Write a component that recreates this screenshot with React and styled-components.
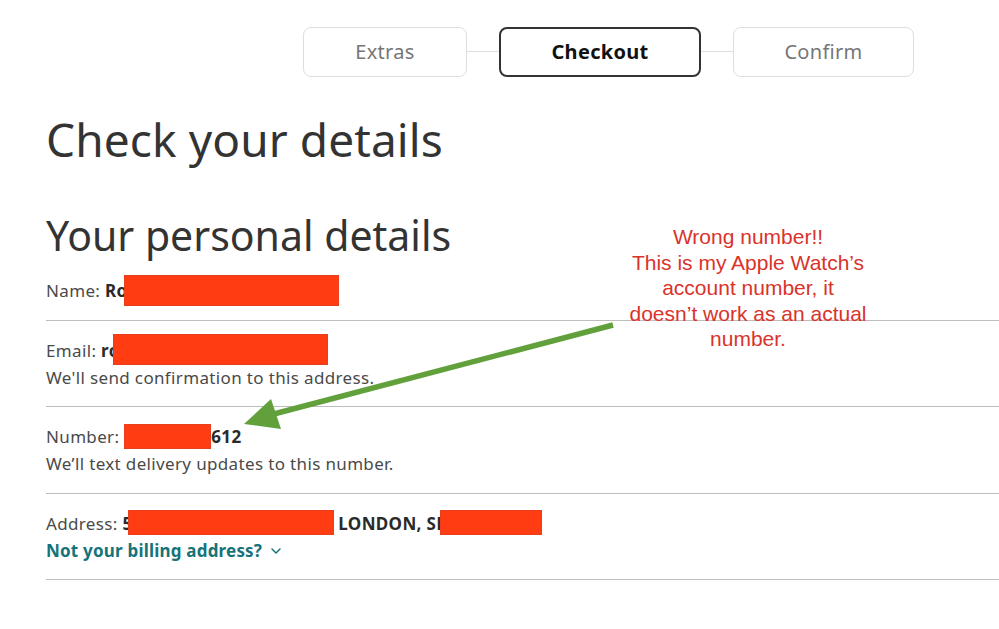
import React from "react";
import styled, { createGlobalStyle } from "styled-components";
import { ChevronDown } from "lucide-react";

const GlobalStyle = createGlobalStyle`
  html, body {
    margin: 0;
    padding: 0;
    background: #ffffff;
  }
  body {
    font-family: "Noto Sans", "Open Sans", sans-serif;
    color: #333;
    overflow: hidden;
  }
`;

const steps = [
  { label: "Extras", width: 164 },
  { label: "Checkout", width: 202, active: true },
  { label: "Confirm", width: 181 },
];

// value parts: strings are text, objects are redaction boxes (width, height, overlap)
const rows = [
  { label: "Name:", value: ["Ro", { w: 215, h: 31, o: 4 }] },
  {
    label: "Email:",
    value: ["ro", { w: 215, h: 31, o: 7 }],
    note: "We'll send confirmation to this address.",
  },
  {
    label: "Number:",
    value: ["0", { w: 87, h: 25, o: 10 }, "612"],
    note: "We’ll text delivery updates to this number.",
  },
  {
    label: "Address:",
    value: ["5", { w: 206, h: 25, o: 5 }, " LONDON, SE", { w: 102, h: 25, o: 6 }],
    link: "Not your billing address?",
  },
];

export default function App() {
  return (
    <Page>
      <GlobalStyle />
      <Stepper>
        {steps.map((s, i) => (
          <React.Fragment key={s.label}>
            {i > 0 && <Connector />}
            <Step active={s.active} style={{ width: s.width }}>
              {s.label}
            </Step>
          </React.Fragment>
        ))}
      </Stepper>

      <Title>Check your details</Title>
      <SubTitle>Your personal details</SubTitle>

      <List>
        {rows.map((r) => (
          <Row key={r.label}>
            <Line>
              {r.label}{" "}
              <Value>
                {r.value.map((p, i) =>
                  typeof p === "string" ? (
                    <span key={i}>{p}</span>
                  ) : (
                    <Redact key={i} style={{ width: p.w, height: p.h, marginLeft: -p.o }} />
                  )
                )}
              </Value>
            </Line>
            {r.note && <Line>{r.note}</Line>}
            {r.link && (
              <Link>
                {r.link}
                <ChevronDown size={16} strokeWidth={2.2} />
              </Link>
            )}
          </Row>
        ))}
      </List>

      <Note>
        Wrong number!!
        <br />
        This is my Apple Watch’s
        <br />
        account number, it
        <br />
        doesn’t work as an actual
        <br />
        number.
      </Note>

      <Arrow width="999" height="629" viewBox="0 0 999 629">
        <line x1="613" y1="325" x2="270" y2="415" stroke="#62a03c" strokeWidth="5.5" />
        <polygon points="244,424 271,399 281,429" fill="#62a03c" />
      </Arrow>
    </Page>
  );
}

const Page = styled.div`
  position: relative;
  width: 999px;
  height: 629px;
  padding: 26px 0 0 46px;
  box-sizing: border-box;
`;

const Stepper = styled.div`
  display: flex;
  align-items: center;
  margin-left: 257px;
  height: 51px;
`;

const Step = styled.div`
  box-sizing: border-box;
  height: 50px;
  display: flex;
  align-items: center;
  justify-content: center;
  border-radius: 8px;
  border: ${({ active }) => (active ? "2px solid #333" : "1px solid #dedede")};
  font-size: 20px;
  letter-spacing: 0.3px;
  font-weight: ${({ active }) => (active ? 700 : 400)};
  color: ${({ active }) => (active ? "#111" : "#767676")};
  background: #fff;
`;

const Connector = styled.div`
  width: 32px;
  height: 1px;
  background: #dedede;
`;

const Title = styled.h1`
  margin: 32px 0 0;
  font-size: 46px;
  font-weight: 400;
  line-height: 60px;
  color: #333;
  letter-spacing: 0.1px;
`;

const SubTitle = styled.h2`
  margin: 40px 0 0;
  font-size: 41px;
  font-weight: 400;
  line-height: 52px;
  color: #333;
`;

const List = styled.div`
  margin-right: -10px;
`;

const Row = styled.div`
  padding: 16px 0 15.5px;
  border-bottom: 1px solid #bdbdbd;
`;

const Line = styled.div`
  font-size: 17px;
  letter-spacing: 0.35px;
  line-height: 27px;
  height: 27px;
  color: #4a4a4a;
  white-space: nowrap;
`;

const Value = styled.span`
  font-weight: 700;
  color: #2a2a2a;
`;

const Redact = styled.span`
  display: inline-block;
  vertical-align: middle;
  margin-top: -6px;
  margin-bottom: -2px;
  background: #ff3c12;
  box-shadow: inset 0 0 0 1px #e8401e;
`;

const Link = styled.div`
  display: flex;
  align-items: center;
  gap: 6px;
  font-size: 17px;
  letter-spacing: 0.2px;
  line-height: 27px;
  font-weight: 700;
  color: #16737a;
  svg {
    margin-top: 2px;
  }
`;

const Note = styled.div`
  position: absolute;
  left: 588px;
  top: 224px;
  width: 320px;
  text-align: center;
  font-family: "Liberation Sans", Arial, sans-serif;
  font-size: 21px;
  line-height: 25.5px;
  color: #d9332a;
`;

const Arrow = styled.svg`
  position: absolute;
  left: 0;
  top: 0;
  pointer-events: none;
`;
